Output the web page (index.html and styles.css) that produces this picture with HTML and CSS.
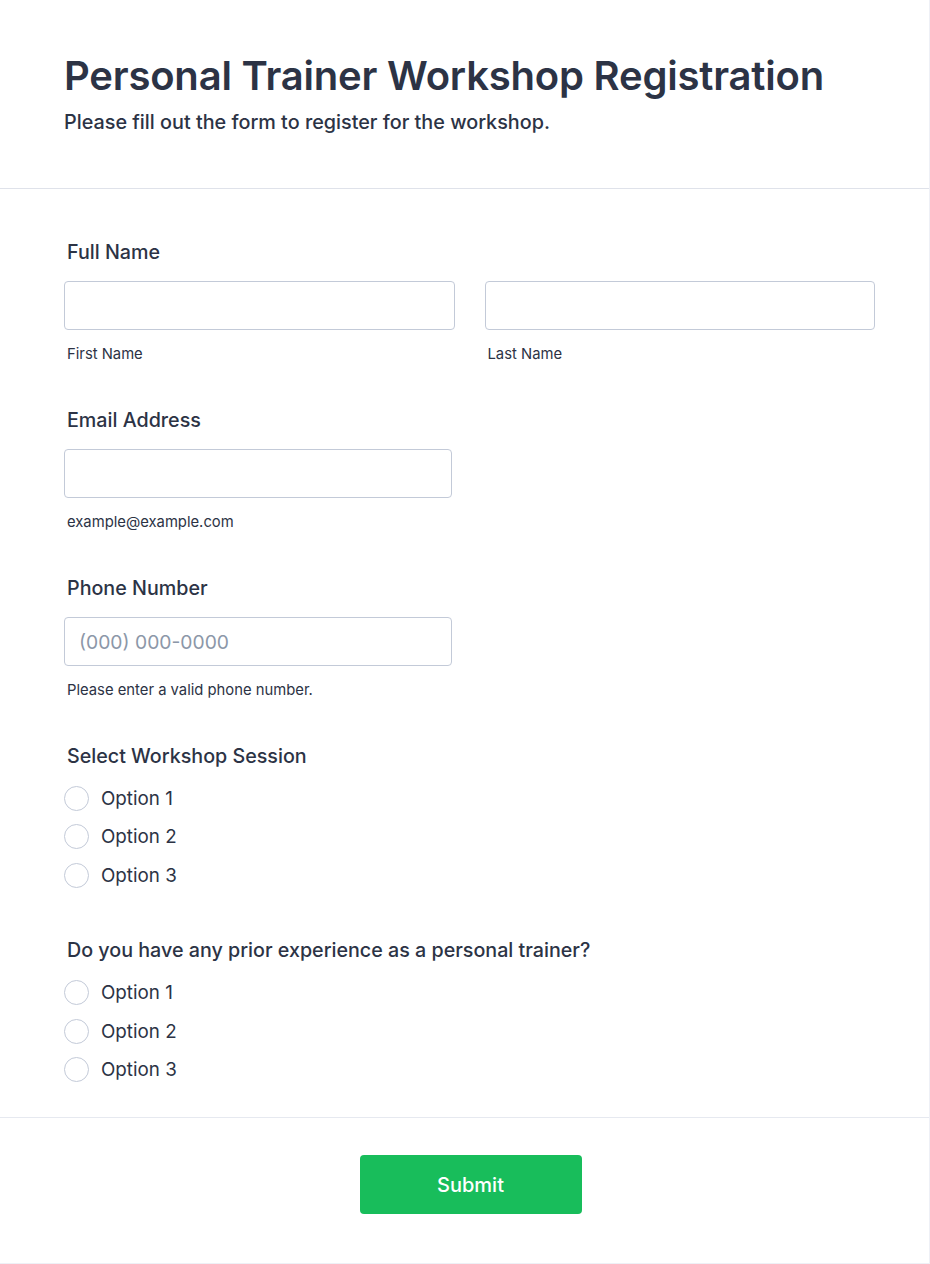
FILE: index.html
```html
<!DOCTYPE html>
<html lang="en">
<head>
<meta charset="utf-8">
<title>Personal Trainer Workshop Registration</title>
<link rel="stylesheet" href="styles.css">
</head>
<body>
<div class="card">
  <header class="header">
    <h1 class="title">Personal Trainer Workshop Registration</h1>
    <p class="subtitle">Please fill out the form to register for the workshop.</p>
  </header>
  <form class="form">
    <div class="field">
      <label class="label">Full Name</label>
      <div class="row">
        <div class="col">
          <input class="input" type="text">
          <span class="sublabel">First Name</span>
        </div>
        <div class="col">
          <input class="input" type="text">
          <span class="sublabel">Last Name</span>
        </div>
      </div>
    </div>
    <div class="field">
      <label class="label">Email Address</label>
      <div class="col half">
        <input class="input" type="email">
        <span class="sublabel">example@example.com</span>
      </div>
    </div>
    <div class="field">
      <label class="label">Phone Number</label>
      <div class="col half">
        <input class="input" type="tel" placeholder="(000) 000-0000">
        <span class="sublabel">Please enter a valid phone number.</span>
      </div>
    </div>
    <div class="field choice">
      <label class="label">Select Workshop Session</label>
      <div class="options">
        <label class="option"><span class="radio"></span>Option 1</label>
        <label class="option"><span class="radio"></span>Option 2</label>
        <label class="option"><span class="radio"></span>Option 3</label>
      </div>
    </div>
    <div class="field last">
      <label class="label">Do you have any prior experience as a personal trainer?</label>
      <div class="options">
        <label class="option"><span class="radio"></span>Option 1</label>
        <label class="option"><span class="radio"></span>Option 2</label>
        <label class="option"><span class="radio"></span>Option 3</label>
      </div>
    </div>
  </form>
  <footer class="footer">
    <button class="submit" type="button">Submit</button>
  </footer>
</div>
</body>
</html>
```

FILE: styles.css
```css
* { box-sizing: border-box; }
html, body { margin: 0; padding: 0; background: #ffffff; }
body {
  font-family: Inter, "Noto Sans", sans-serif;
  color: #2c3345;
}
.card {
  width: 930px;
  min-height: 1264px;
  border-right: 1px solid #eef0f6;
  border-bottom: 1px solid #eef0f6;
  background: #fff;
}
.header {
  padding: 52px 64px 52px;
  border-bottom: 1px solid #dfe2ea;
}
.title {
  margin: 0;
  font-size: 40px;
  line-height: 48px;
  font-weight: 600;
  letter-spacing: -0.2px;
  color: #2c3345;
}
.subtitle {
  margin: 8px 0 0;
  font-size: 19.8px;
  line-height: 28px;
  font-weight: 500;
  color: #2c3345;
}
.form {
  padding: 50px 54px 28px 64px;
  border-bottom: 1px solid #e6e9f0;
}
.field {
  display: flex;
  flex-direction: column;
  margin-bottom: 43px;
}
.field.choice { margin-bottom: 42px; }
.field.last { margin-bottom: 0; }
.field.last .options { margin-top: -5px; }
.label {
  padding-left: 3px;
  font-size: 19.7px;
  line-height: 26px;
  font-weight: 500;
  color: #2c3345;
  margin-bottom: 16px;
}
.row {
  display: flex;
  gap: 30px;
}
.col {
  display: flex;
  flex-direction: column;
  flex: 1;
}
.col.half {
  flex: none;
  width: 388px;
}
.input {
  height: 49px;
  width: 100%;
  border: 1px solid #c3cad8;
  border-radius: 4px;
  padding: 0 14px;
  font-family: Inter, "Noto Sans", sans-serif;
  font-size: 19.3px;
  color: #2c3345;
  background: #fff;
  outline: none;
}
.input::placeholder { color: #8c97a8; }
.sublabel {
  margin-top: 14px;
  padding-left: 3px;
  font-size: 14.8px;
  line-height: 20px;
  color: #2c3345;
}
.options {
  display: flex;
  flex-direction: column;
  margin-top: -6px;
}
.option {
  display: flex;
  align-items: center;
  height: 38.5px;
  font-size: 18.8px;
  color: #2c3345;
}
.radio {
  width: 25px;
  height: 25px;
  border: 1px solid #c3cad8;
  border-radius: 50%;
  margin-right: 12px;
  background: #fff;
  flex: none;
}
.footer {
  display: flex;
  justify-content: center;
  padding: 37px 0 0 12px;
}
.submit {
  width: 222px;
  height: 59px;
  border: none;
  border-radius: 4px;
  background: #18bd5b;
  color: #fff;
  font-family: Inter, "Noto Sans", sans-serif;
  font-size: 20px;
  font-weight: 500;
}
```
